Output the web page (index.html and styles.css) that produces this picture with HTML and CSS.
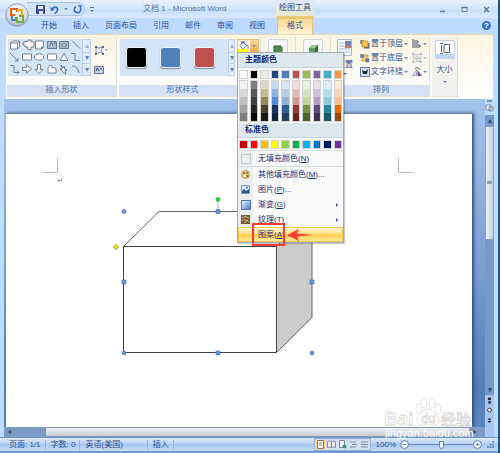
FILE: index.html
```html
<!DOCTYPE html>
<html lang="zh-CN">
<head>
<meta charset="utf-8">
<title>文档 1 - Microsoft Word</title>
<link rel="stylesheet" href="styles.css">
</head>
<body>
<div class="window">
  <header class="titlebar">
    <button class="office" aria-label="Office">
      <svg viewBox="0 0 24 24"><defs><radialGradient id="orb" cx=".5" cy=".3" r=".8"><stop offset="0" stop-color="#fff"/><stop offset=".6" stop-color="#d3d8e2"/><stop offset="1" stop-color="#8b98ae"/></radialGradient></defs><circle cx="12" cy="12" r="11.3" fill="url(#orb)" stroke="#8796b4" stroke-width=".8"/><g fill="none" stroke-width="2"><path d="M10 12H6V6h6v3" stroke="#e5601c"/><path d="M13 9V7h4v5h-3" stroke="#f3ab23"/><path d="M7 13v4h4v-3" stroke="#4d86d4"/><path d="M12 14v5h6v-6h-4" stroke="#72b03a"/></g></svg>
    </button>
    <div class="quick">
      <button aria-label="保存"><svg class="i9" viewBox="0 0 9 9"><path d="M.5.5h8v8h-8z" fill="#4650a8" stroke="#35408c"/><path d="M2 1h5v3H2z" fill="#e6ebfa"/><path d="M3 6h4v3H3z" fill="#dfe5f5"/></svg></button>
      <button aria-label="撤消"><svg class="i9" viewBox="0 0 9 9"><path d="M2 4.500C3 1.500 8 1 7.500 5 7.300 7 6 8 4.500 8.500" fill="none" stroke="#3e6fd0" stroke-width="1.700"/><path d="M0 2l1 4 4-1z" fill="#3e6fd0"/></svg></button>
      <span class="caret"></span>
      <button aria-label="恢复"><svg class="i9" viewBox="0 0 9 9"><path d="M3 1.500C.5 3 .5 7.500 4.500 7.700 8 7.700 8.300 4 7 2.500" fill="none" stroke="#3e6fd0" stroke-width="1.700"/><path d="M4.500 0h4v4z" fill="#3e6fd0"/></svg></button>
    </div>
    <button class="customize" aria-label="自定义快速访问工具栏"><span class="caret"></span></button>
    <h1>文档 1 - Microsoft Word</h1>
    <span class="context">绘图工具</span>
    <div class="controls">
      <button aria-label="最小化"><svg class="i7" viewBox="0 0 7 7"><path d="M1 5.500h5" stroke="#65758c" stroke-width="1.500"/></svg></button>
      <button aria-label="还原"><svg class="i7" viewBox="0 0 7 7"><path d="M1 1.500h5v4H1z" fill="#dbe6f5" stroke="#7a879b"/><path d="M.5 1.500h6" stroke="#65758c" stroke-width="1.500"/></svg></button>
      <button aria-label="关闭"><svg class="i7" viewBox="0 0 7 7"><path d="M1.200 1l4.600 5M5.800 1L1.200 6" stroke="#65758c" stroke-width="1.300"/></svg></button>
    </div>
  </header>

  <nav class="tabs">
    <a href="#">开始</a><a href="#">插入</a><a href="#">页面布局</a><a href="#">引用</a><a href="#">邮件</a><a href="#">审阅</a><a href="#">视图</a><a href="#" class="active">格式</a>
    <button class="help" aria-label="帮助">?</button>
  </nav>

  <div class="ribbon">
    <section class="group shapes">
      <div class="tools">
        <div class="gallery">
          <svg class="shape-icons" viewBox="0 0 74 37" fill="#fff" stroke="#58647a" stroke-width=".8">
            <path d="M2.500 4l2-2h7v6l-2 2h-7zM2.500 4h7v6M9.500 4l2-2"/>
            <path d="M16 2.500h4V1l3 0v2h3v5h-3v2.500h-3V8h-3V6l-2 0V4h1z"/><path d="M27.500 2h8v6l-2 2h-6zM35.500 8h-2v2"/>
            <path d="M39.500 2.500h9v7h-9z" fill="#a8bace"/><path d="M42 7l1.500-3L45 7M46 4h1.500" stroke="#34445b"/><path d="M51.500 2.500h9v7h-9z" fill="#a8bace"/><path d="M54 5h4v2h-4z"/>
            <path d="M64 1.500l8 8" fill="none"/><path d="M2 14l8 8M10 19v3H7" fill="none"/><path d="M14.500 15h9v6h-9z"/><ellipse cx="31" cy="18" rx="4.600" ry="3.200"/><rect x="39.500" y="15" width="9" height="6" rx="1"/><path d="M52 21.500l4-7 4 7z"/><path d="M63 14.500h4v7h5" fill="none"/>
            <path d="M2 26.500h4v7h5M9 31.500l2 2-2 2" fill="none"/><path d="M14.500 28.500h4V26l5 4-5 4v-2.500h-4z"/><path d="M29.500 25.500h3v5H35l-4 4-4-4h2.500z"/><path d="M40 34v-5c2-4 5-3 4 0 3-1 4 0 4 2v3z"/><path d="M53 26l2 3 1-2 1 4 2 0-2 1 1 3-3-2-3-3 2 0z"/><path d="M64 27q6 0 7 7" fill="none"/>
          </svg>
          <div class="scroller"><button aria-label="上一行" class="off">▴</button><button aria-label="下一行">▾</button><button aria-label="更多形状">▾</button></div>
        </div>
        <div class="stack">
          <button aria-label="编辑形状"><svg class="i14" viewBox="0 0 14 10"><path d="M2 2l3 1 4-1-2 3 2 4-3-2-4 2z" fill="#e6eefb" stroke="#6c7ba2" stroke-width=".8"/><path d="M1 1h2v2H1zM8 1h2v2H8zM1 8h2v2H1zM8 8h2v2H8z" fill="#56658d"/><path d="M11 4h3l-1.500 2z" fill="#8e98a8"/></svg></button>
          <button aria-label="文本框"><svg class="i14" viewBox="0 0 14 10"><path d="M.5 1.500h9v7h-9z" fill="#c5d3e4" stroke="#657288"/><path d="M2 6l1.500-3L5 6M6 4h2" fill="none" stroke="#273950"/></svg></button>
        </div>
      </div>
      <h2>插入形状</h2>
    </section>
    <section class="group styles">
      <div class="tools">
        <div class="gallery style-gallery">
          <button class="sample black" aria-label="黑色"></button><button class="sample blue" aria-label="蓝色"></button><button class="sample red" aria-label="红色"></button>
          <div class="scroller"><button aria-label="上一行" class="off">▴</button><button aria-label="下一行">▾</button><button aria-label="更多样式">▾</button></div>
        </div>
        <div class="fill">
          <button class="fill-button" aria-label="形状填充" aria-expanded="true">
            <svg viewBox="0 0 12 11"><path d="M0 8h10v3H0z" fill="#ff0"/><path d="M2 4.500L5 1l3.500 3.500L5 8z" fill="#e7eef9" stroke="#56729e" stroke-width=".8"/><path d="M4 3V0h2v3M8 4c3 0 2 3 2 4" stroke="#4676bf" fill="none"/></svg><span class="arrow"><span class="caret"></span></span>
          </button>
          <div class="menu">
            <h3>主题颜色</h3>
            <div class="swatches" id="theme"></div>
            <div class="swatches shades" id="shades"></div>
            <h3>标准色</h3>
            <div class="swatches" id="standard"></div>
            <ul>
              <li class="nofill"><button><span class="icon"><i class="empty"></i></span>无填充颜色(<u>N</u>)</button></li>
              <li><button><span class="icon"><svg class="i9" viewBox="0 0 9 9"><circle cx="4.500" cy="4.500" r="4" fill="#edc463" stroke="#a7802c" stroke-width=".6"/><circle cx="3" cy="3" r="1" fill="#d2442b"/><circle cx="6" cy="3" r="1" fill="#4c7fd0"/><circle cx="3.500" cy="6" r="1" fill="#fff"/><circle cx="6.500" cy="6" r="1" fill="#377a3b"/></svg></span>其他填充颜色(<u>M</u>)...</button></li>
              <li><button><span class="icon"><svg class="i9" viewBox="0 0 9 9"><path d="M.5.500h8v8h-8z" fill="#d5e8fb" stroke="#809abd"/><path d="M1 8V6l2-2 2 2 3-2v4z" fill="#2b548d"/><circle cx="6" cy="2.500" r="1" fill="#496fae"/></svg></span>图片(<u>P</u>)...</button></li>
              <li><button><span class="icon"><i class="gradient"></i></span>渐变(<u>G</u>)<span class="more"></span></button></li>
              <li><button><span class="icon"><svg class="i9" viewBox="0 0 9 9"><path d="M0 0h9v9H0z" fill="#705a35"/><path d="M1 3q3-3 7 0M1 6q3-3 7 1M3 8l4-3" fill="none" stroke="#dfc58a"/></svg></span>纹理(<u>T</u>)<span class="more"></span></button></li>
              <li class="hot"><button><span class="icon"></span>图案(<u>A</u>)...</button>
                <span class="frame"></span>
                <svg class="pointer" viewBox="0 0 26 12"><path d="M0 6L12 0 10 4.500 26 6 10 7.500 12 12z" fill="#f83b35"/></svg>
              </li>
            </ul>
          </div>
        </div>
      </div>
      <h2>形状样式</h2>
    </section>
    <section class="group effect"><div class="tools"><button class="big" aria-label="阴影效果"><svg viewBox="0 0 18 13"><path d="M6 4h8v8H6z" fill="#9aa69b"/><path d="M5 3h7v7H5z" fill="#4d8a4c" stroke="#306234"/></svg></button></div><h2></h2></section>
    <section class="group effect"><div class="tools"><button class="big" aria-label="三维效果"><svg viewBox="0 0 18 13"><path d="M5 5l3-3h6v6l-3 4H5z" fill="#2f683a"/><path d="M5 5l3-3h6l-3 3z" fill="#9bcb91"/><path d="M5 5h6v7H5z" fill="#5d9d5a"/></svg></button></div><h2></h2></section>
    <section class="group arrange">
      <div class="tools">
        <button class="position"><svg viewBox="0 0 16 18"><path d="M.5.500h14v16H.5z" fill="#f6f8fc" stroke="#acb7c9"/><path d="M2 4h5M2 7h5M2 10h11M2 13h11" stroke="#a9b9d4"/><path d="M8 2h6v7H8z" fill="#6d84b8"/><path d="M8 9l3-4 3 4z" fill="#d47b69"/></svg><span>位置</span><span class="caret"></span></button>
        <div class="stack">
          <button><svg class="i10" viewBox="0 0 10 10"><path d="M4 4h5.500v5.500H4z" fill="#5a677a"/><path d="M0 1h4v4H0z" fill="#8793a6"/><path d="M2 2h6v6H2z" fill="#f6c344" stroke="#b5862b" stroke-width=".7"/></svg>置于顶层<span class="caret"></span></button>
          <button><svg class="i10" viewBox="0 0 10 10"><path d="M2 2h6v6H2z" fill="#f6c344" stroke="#b5862b" stroke-width=".7"/><path d="M0 1h4.500v4H0zM5 5h4.500v4.500H5z" fill="#65758d" stroke="#fff" stroke-width=".5"/></svg>置于底层<span class="caret"></span></button>
          <button><svg class="i10" viewBox="0 0 10 10"><path d="M.5.500h9v9h-9z" fill="#d4dfef" stroke="#6b7b94"/><path d="M2 3l1 4h4l1-5-2 2-2 0z" fill="#202833"/></svg>文字环绕<span class="caret"></span></button>
        </div>
        <div class="stack">
          <button aria-label="对齐"><svg class="i10" viewBox="0 0 10 10"><path d="M1 0v9M2 2h4v2H2M2 6h6v2H2" fill="none" stroke="#43536f"/></svg><span class="caret"></span></button>
          <button aria-label="组合" class="off"><svg class="i10" viewBox="0 0 10 10"><path d="M1.500 1.500h7v7h-7zM3 3h3v3H3zM5 5h3v3H5z" fill="none" stroke="#7788a6" stroke-width=".8"/><path d="M0 0h2v2H0zM8 0h2v2H8zM0 8h2v2H0zM8 8h2v2H8z" fill="#7788a6"/></svg><span class="caret"></span></button>
          <button aria-label="旋转"><svg class="i10" viewBox="0 0 10 10"><path d="M0 8.500h4.500V3z" fill="#d9e2f2" stroke="#8290ad" stroke-width=".7"/><path d="M5.500 3v6H10z" fill="#784095"/><path d="M3 2q3-3 5 1" fill="none" stroke="#3e7a4c"/></svg><span class="caret"></span></button>
        </div>
      </div>
      <h2>排列</h2>
    </section>
    <section class="group size"><button><span class="size-icon"><svg viewBox="0 0 12 11"><path d="M5 1.500h5.500v8H5z" fill="#fff" stroke="#566782"/><path d="M1 .5h3M1 10.500h3M2.500 2v7" stroke="#566782"/></svg></span>大小<span class="caret"></span></button></section>
  </div>

  <main class="work">
    <div class="view">
      <article class="sheet">
        <svg class="drawing" viewBox="6 113 466 314" fill="none">
          <path d="M57.500 158v14.500H42.500M398.500 158v14.500h14.500" stroke="#bbb"/>
          <path d="M61.500 178v2.500H58M59.500 179L58 180.500l1.500 1.500" stroke="#888" stroke-width=".8"/>
          <path d="M123.500 246.500l35.500-35.500h153v106.500l-35.500 35.500z" fill="#fff"/>
          <path d="M276.500 246.500l35.500-35.500v106.500l-35.500 35.500z" fill="#ccc"/>
          <path d="M123.500 246.500l35.500-35h153v106l-35.500 35M276.500 246.500l35.500-35" stroke="#666"/>
          <path d="M123.500 246.500h153v106h-153z" stroke="#444"/>
          <path d="M218 202v8" stroke="#9cb0d6"/>
          <g fill="#5f97e2" stroke="#456fab" stroke-width=".6"><circle cx="124" cy="211.500" r="2"/><circle cx="124" cy="353" r="2"/><circle cx="312" cy="353" r="2"/><path d="M216 209.500h4v4h-4zM122 280h4v4h-4zM310 280h4v4h-4zM216 351h4v4h-4z"/></g>
          <circle cx="218" cy="199.500" r="2" fill="#0de42a" stroke="#15a52a" stroke-width=".6"/>
          <path d="M116 244.500l2.500 2.500-2.500 2.500-2.500-2.500z" fill="#ff0" stroke="#777000" stroke-width=".8"/>
        </svg>
      </article>
      <div class="hscroll"><button aria-label="向左">◂</button><span class="hthumb"></span><button aria-label="向右">▸</button></div>
    </div>
    <div class="vscroll">
      <button class="ruler" aria-label="标尺"><svg viewBox="0 0 9 13"><path d="M2 1h5" stroke="#35445e"/><path d="M1 5h5v5H1zM4 7h4v4H4z" fill="#eef3fb" stroke="#65718a" stroke-width=".8"/></svg></button>
      <button class="step" aria-label="向上">▴</button>
      <div class="track"><span class="vthumb"></span></div>
      <button class="step" aria-label="向下">▾</button>
      <div class="browse"><svg viewBox="0 0 9 42"><path d="M3 4.500h3M3 8h3" stroke="#222"/><path d="M2.500 4l2-2 2 2zM2.500 7.500l2-2 2 2z" fill="#222"/><circle cx="4.500" cy="15" r="2" fill="#ddd" stroke="#4c4c4c"/><path d="M2.500 23.500l2 2 2-2zM2.500 26l2 2 2-2z" fill="#222"/></svg></div>
    </div>
  </main>

  <footer class="status">
    <span>页面: 1/1</span><span>字数: 0</span><span class="lang">英语(美国)</span><span>插入</span>
    <div class="views">
      <button class="on" aria-label="页面视图"><svg class="i9" viewBox="0 0 9 9"><path d="M1.500.5h6v8h-6z" fill="#eee" stroke="#877455"/><path d="M3 3h3M3 5h3" stroke="#998"/></svg></button>
      <button aria-label="阅读版式"><svg class="i9" viewBox="0 0 9 9"><path d="M.5 1.500q2-1 4 0 2-1 4 0v6q-2-1-4 0-2-1-4 0zM4.500 2v5" fill="#eee" stroke="#7e8ba0"/></svg></button>
      <button aria-label="Web 版式"><svg class="i9" viewBox="0 0 9 9"><path d="M1.500.5h5v7h-5z" fill="#eee" stroke="#7e8ba0"/><circle cx="6.500" cy="6.500" r="2" fill="#3f9279"/></svg></button>
      <button aria-label="大纲"><svg class="i9" viewBox="0 0 9 9"><path d="M1 2h6M3 4.500h5M1 7h6" stroke="#7e8ba0"/></svg></button>
      <button aria-label="普通"><svg class="i9" viewBox="0 0 9 9"><path d="M1 2h7M1 4.500h7M1 7h7" stroke="#7e8ba0"/></svg></button>
    </div>
    <button class="percent">100%</button>
    <button class="round" aria-label="缩小">−</button>
    <input type="range" aria-label="显示比例" min="0" max="100" value="50">
    <button class="round" aria-label="放大">+</button>
    <svg class="grip" viewBox="0 0 8 8"><path d="M6 0h2v2H6zM3 3h2v2H3zM6 3h2v2H6zM0 6h2v2H0zM3 6h2v2H3zM6 6h2v2H6z" fill="#6787b8"/></svg>
  </footer>

  <svg class="watermark" viewBox="0 0 92 44">
    <g class="mark"><text x="0" y="28" class="brand">Bai</text>
      <ellipse cx="35" cy="12" rx="3" ry="5"/><ellipse cx="40" cy="6" rx="3" ry="5"/><ellipse cx="48" cy="6" rx="3" ry="5"/><ellipse cx="54" cy="12" rx="3" ry="5"/>
      <path d="M44 12c5 0 6 4 9 7 5 6 0 10-4 9-3-1-7-1-10 0-5 1-9-4-4-9 3-3 4-7 9-7z"/>
      <text x="37" y="26" class="du">du</text><text x="57" y="28" class="cn">经验</text></g>
    <text x="1" y="40" class="url">jingyan.baidu.com</text>
  </svg>
</div>
<script src="palette.js"></script>
</body>
</html>
```

FILE: styles.css
```css
* { box-sizing: border-box; }
body {
  margin: 0;
  background: #1c5596;
  color: #33508a;
  font: 8px/10px "Liberation Sans", "Noto Sans CJK SC", sans-serif;
}
button {
  display: flex;
  align-items: center;
  margin: 0;
  padding: 0;
  border: 0;
  background: none;
  color: inherit;
  font: inherit;
}
svg { display: block; flex: none; }
h1, h2, h3 { margin: 0; font: inherit; }
ul { margin: 0; padding: 0; list-style: none; }
.i7 { width: 7px; height: 7px; }
.i9 { width: 9px; height: 9px; }
.i10 { width: 10px; height: 10px; }
.i14 { width: 14px; height: 10px; }
.caret {
  flex: none;
  border: 2px solid transparent;
  border-top-color: #6385b5;
  border-bottom: 0;
}
.window {
  position: relative;
  display: flex;
  flex-direction: column;
  height: 100vh;
  margin-right: 2px;
  border-bottom: 2px solid #6e9ad2;
  background: #bfdbff;
}

/* Title bar */
.titlebar {
  display: flex;
  align-items: center;
  height: 18px;
  padding-right: 8px;
  background: linear-gradient(#e8f2fd, #d2e4fa 50%, #c6dcf8 55%, #dceaff);
}
.office {
  z-index: 2;
  align-self: flex-start;
  width: 24px;
  margin: 3px 0 0 5px;
}
.office svg { width: 24px; height: 24px; }
.quick {
  display: flex;
  align-items: center;
  gap: 5px;
  width: 58px;
  height: 14px;
  margin-left: -2px;
  padding-left: 9px;
  border: 1px solid #a9c3e8;
  border-left: 0;
  border-radius: 0 7px 7px 0;
  background: #d3e3f8;
}
.customize { margin-left: 5px; border-top: 1px solid #5873a0; padding-top: 2px; }
h1 { margin-left: 49px; color: #63779a; white-space: nowrap; }
.context {
  display: flex;
  align-items: center;
  justify-content: center;
  position: absolute;
  left: 276px;
  width: 38px;
  height: 18px;
  border-bottom: 2px solid #eacb74;
  background: linear-gradient(#dfeafa, #eae7cf);
}
.controls { display: flex; gap: 15px; margin-left: auto; }

/* Tabs */
.tabs {
  display: flex;
  align-items: flex-end;
  height: 16px;
  padding: 0 7px 0 33px;
}
.tabs a { padding: 3px 8px; color: inherit; text-decoration: none; }
.tabs .active {
  margin-left: 4px;
  padding: 2px 9px 3px;
  border: 1px solid #e2c27c;
  border-bottom: 0;
  border-radius: 2px 2px 0 0;
  background: linear-gradient(#fbd98f, #fef3d4);
}
.help {
  justify-content: center;
  width: 9px;
  height: 9px;
  margin: 0 0 4px auto;
  border-radius: 50%;
  background: #3c6fc9;
  color: #fff;
  font-weight: bold;
}

/* Ribbon */
.ribbon {
  display: flex;
  gap: 2px;
  height: 65px;
  margin: 0 4px 0 5px;
  padding: 2px 1px 1px;
  border: 1px solid #e3d8bd;
  border-bottom: 1px solid #fff;
  border-radius: 3px;
  background: linear-gradient(#fdf5df, #fbf9f2 50%, #fff);
}
.group {
  display: flex;
  flex-direction: column;
  border: 1px solid #e0dfda;
  border-top: 0;
  border-left: 0;
  background: linear-gradient(#fbf3df, #fbfaf5 60%, #fff);
}
.group h2 {
  height: 11px;
  margin-top: auto;
  background: #d5e1f3;
  color: #4a6ea6;
  text-align: center;
}
.tools { display: flex; padding: 2px 1px 0; }
.shapes { width: 110px; }
.styles { width: 142px; }
.styles h2 { padding-right: 14px; }
.effect { width: 33px; }
.arrange { width: 97px; }
.size { width: 26px; background: linear-gradient(#f6f3eb, #eee); }
.gallery {
  display: flex;
  height: 37px;
  background: #d5e5f8;
}
.shape-icons { width: 74px; height: 37px; }
.scroller {
  display: grid;
  grid-template-rows: repeat(3, 1fr);
  width: 9px;
  margin-left: auto;
  border: 1px solid #bfd1ea;
  background: #e1ecfb;
  color: #6385b5;
}
.scroller button { justify-content: center; overflow: hidden; }
.scroller button + button { border-top: 1px solid #bfd1ea; }
.off { opacity: .5; }
.stack {
  display: flex;
  flex-direction: column;
  justify-content: space-between;
  margin-left: 3px;
}
.shapes .stack { padding: 6px 0 1px; }
.style-gallery {
  align-items: center;
  gap: 13px;
  width: 115px;
  padding-left: 6px;
}
.style-gallery .scroller { height: 37px; }
.sample {
  flex: none;
  width: 21px;
  height: 21px;
  border: 1px solid #edf2f9;
  border-radius: 3px;
  box-shadow: 0 1px 1px #889;
}
.black { background: #000; }
.blue { background: #4f81bd; }
.red { background: #c0504d; }
.fill { position: relative; margin-left: 2px; }
.fill-button { border: 1px solid #dcbf7f; height: 14px; }
.fill-button svg { width: 12px; height: 11px; }
.arrow {
  display: flex;
  align-items: center;
  justify-content: center;
  width: 8px;
  height: 12px;
  background: linear-gradient(#fbd9a0, #f5a944);
}
.big {
  justify-content: center;
  width: 20px;
  height: 21px;
  margin: 0 4px;
  border: 1px solid #c9d6e5;
  border-radius: 2px;
  background: #f7faf8;
}
.big svg { width: 18px; height: 13px; }
.position { flex-direction: column; gap: 3px; width: 16px; margin-left: 3px; white-space: nowrap; }
.position svg { width: 16px; height: 18px; }
.arrange .stack { height: 38px; margin-left: 7px; }
.arrange .stack + .stack { margin-left: 4px; }
.arrange .stack button { gap: 1px; height: 10px; white-space: nowrap; }
.size button { flex-direction: column; gap: 6px; padding-top: 3px; }
.size-icon {
  display: flex;
  justify-content: center;
  width: 20px;
  height: 19px;
  margin: 0 2px;
  padding-top: 2px;
  border: 1px solid #c0d1e4;
  border-bottom: 5px solid #c0d7ee;
  border-radius: 2px;
  background: #fff;
}
.size-icon svg { width: 12px; height: 11px; }

/* Fill colour menu */
.menu {
  position: absolute;
  z-index: 5;
  top: 13px;
  left: 0;
  width: 107px;
  border: 1px solid #a5abb5;
  background: #fafafa;
  color: #1b2e72;
  box-shadow: 1px 1px 1px #0003;
}
.menu h3 {
  height: 15px;
  padding: 2px 7px;
  border-bottom: 1px solid #c8d4dd;
  background: #dde7ee;
  color: #0f2474;
  font-weight: bold;
}
.swatches {
  display: grid;
  grid-template-columns: repeat(10, 1fr);
  column-gap: 2px;
  padding: 2px 1px 1px;
}
.swatches button { height: 9px; border: 1px solid #d2d2d0; }
.shades { padding-top: 0; }
.shades div { display: flex; flex-direction: column; border: 1px solid #d2d2d0; }
.shades button { height: 8px; border: 0; }
.menu li { position: relative; }
.menu li button {
  width: 100%;
  height: 15px;
  padding-right: 5px;
  white-space: nowrap;
}
.menu .nofill { border-top: 1px solid #d9dde2; border-bottom: 1px solid #d9dde2; }
.icon {
  display: flex;
  align-items: center;
  justify-content: center;
  width: 15px;
  height: 15px;
  margin-right: 5px;
  background: #e9eeee;
}
.empty, .gradient { width: 10px; height: 10px; border: 1px solid #c5cccc; }
.gradient { border-color: #5878a5; background: linear-gradient(135deg, #e4f1ff, #4b7fc2); }
.more { margin-left: auto; border: 2px solid transparent; border-left-color: #344b86; border-right: 0; }
.menu .hot button {
  border: 1px solid #edc654;
  background: linear-gradient(#fff6ce, #ffe28d 45%, #ffcf4b 50%, #ffe798);
}
.hot .icon { width: 14px; height: 13px; background: none; }
.frame {
  position: absolute;
  top: -4px;
  left: 14px;
  width: 33px;
  height: 23px;
  border: 2px solid #f83b35;
}
.pointer { position: absolute; top: 2px; left: 49px; width: 26px; height: 12px; }

/* Document area */
.work { display: flex; flex: 1; min-height: 0; padding: 0 4px 0 4px; }
.view {
  display: flex;
  flex: 1;
  flex-direction: column;
  padding-top: 14px;
  padding-left: 2px;
  background: linear-gradient(#a3c3ed, #7ea3d6 45%, #527eb5 85%, #5b87c2);
}
.sheet {
  position: relative;
  flex: 1;
  margin-right: 13px;
  border-top: 1px solid #78889e;
  background: #fff;
  box-shadow: 2px 0 3px #33507b;
}
.drawing { position: absolute; top: -1px; left: 0; width: 466px; height: 314px; }
.hscroll { display: flex; z-index: 1; height: 10px; margin-left: -2px; background: #7d9ac4; color: #35517d; }
.hscroll button { width: 15px; padding-left: 3px; }
.hthumb {
  flex: 1;
  margin-left: 26px;
  border: 1px solid #8595ae;
  background: linear-gradient(#edf0f5, #c7cdd8);
}
.vscroll { display: flex; flex-direction: column; width: 9px; color: #304971; }
.ruler svg { width: 9px; height: 13px; }
.ruler { padding: 1px 0 2px; }
.step { justify-content: center; height: 11px; background: #7798c7; }
.track { flex: 1; background: #7898c5; }
.vthumb {
  display: block;
  height: 44%;
  border: 1px solid #8ba1c3;
  background: linear-gradient(#8d9eb8, #8d9eb8) center / 5px 3px no-repeat, linear-gradient(90deg, #eef2f8, #c2d0e3);
}
.browse { background: #a9c7f0; }
.browse svg { width: 9px; height: 42px; }

/* Status bar */
.status {
  display: flex;
  align-items: center;
  height: 14px;
  padding: 0 4px;
  border-top: 1px solid #7195c7;
  background: linear-gradient(#dce9fb, #b9d3f5 45%, #a8c7ef 50%, #c9defa);
  white-space: nowrap;
}
.status > span { padding: 0 4px 0 5px; border-right: 1px solid #94b4df; }
.status .lang { padding-right: 24px; }
.views {
  display: flex;
  gap: 2px;
  margin-left: auto;
  padding: 1px;
  border: 1px solid #94b0d8;
  background: #d4e1f2;
}
.views .on { background: #ffd684; }
.percent { margin: 0 4px 0 5px; }
.round {
  flex: none;
  justify-content: center;
  width: 9px;
  height: 9px;
  border: 1px solid #687f9f;
  border-radius: 50%;
  background: #eff4fb;
}
input[type="range"] {
  width: 64px;
  height: 9px;
  margin: 0;
  appearance: none;
  background: linear-gradient(#6887b4, #6887b4) center / 100% 1px no-repeat;
}
input[type="range"]::-webkit-slider-thumb {
  appearance: none;
  width: 5px;
  height: 8px;
  border: 1px solid #687f9f;
  border-radius: 0 0 3px 3px;
  background: #eff4fb;
}
.grip { width: 7px; height: 7px; margin-left: 5px; }

.watermark {
  position: absolute;
  right: 22px;
  bottom: 10px;
  z-index: 3;
  width: 92px;
  height: 44px;
  pointer-events: none;
}
.mark { fill: #fff; stroke: #d9d9d9; stroke-width: .8; }
.brand { font-size: 19px; font-weight: bold; }
.du { font-size: 12px; font-weight: bold; }
.cn { font-size: 15px; }
.url { fill: #fff; font-size: 11px; }
```

FILE: palette.js
```js
const palettes = {
  theme: ['#ffffff', '#000000', '#eeece1', '#1f497d', '#4f81bd', '#c0504d', '#9bbb59', '#8064a2', '#4bacc6', '#f79646'],
  standard: ['#c00000', '#ff0000', '#ffc000', '#ffff00', '#92d050', '#00b050', '#00b0f0', '#0070c0', '#002060', '#7030a0']
};
const shades = [
  ['#f2f2f2', '#d8d8d8', '#bfbfbf', '#a5a5a5', '#7f7f7f'],
  ['#7f7f7f', '#595959', '#3f3f3f', '#262626', '#0c0c0c'],
  ['#ddd9c3', '#c4bd97', '#938953', '#494429', '#1d1b10'],
  ['#c6d9f0', '#8db3e2', '#548dd4', '#17365d', '#0f243e'],
  ['#dbe5f1', '#b8cce4', '#95b3d7', '#366092', '#244061'],
  ['#f2dcdb', '#e5b9b7', '#d99694', '#953734', '#632423'],
  ['#ebf1dd', '#d7e3bc', '#c3d69b', '#76923c', '#4f6128'],
  ['#e5e0ec', '#ccc1d9', '#b2a2c7', '#5f497a', '#3f3151'],
  ['#dbeef3', '#b7dde8', '#92cddc', '#31859b', '#205867'],
  ['#fdeada', '#fbd5b5', '#fac08f', '#e36c09', '#974806']
];

function swatch(color) {
  const button = document.createElement('button');
  button.style.background = color;
  button.setAttribute('aria-label', color);
  return button;
}

for (const [id, colors] of Object.entries(palettes)) {
  document.getElementById(id).append(...colors.map(swatch));
}
for (const column of shades) {
  const div = document.createElement('div');
  div.append(...column.map(swatch));
  document.getElementById('shades').append(div);
}
```
